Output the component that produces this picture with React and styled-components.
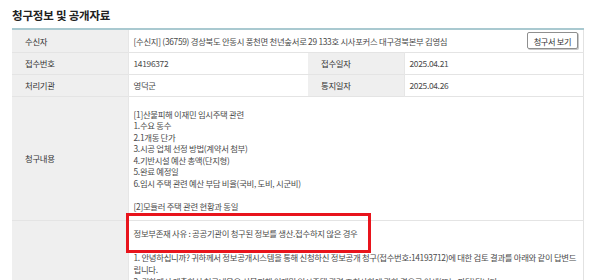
import React from 'react';
import styled, { createGlobalStyle } from 'styled-components';

const GlobalStyle = createGlobalStyle`
  html, body {
    margin: 0;
    padding: 0;
    background: #fff;
    overflow: hidden;
  }
  body {
    font-family: "Noto Sans CJK KR", "Noto Sans", sans-serif;
    color: #333;
  }
`;

const requestLines = [
  '[1]산불피해 이재민 임시주택 관련',
  '1.수요 동수',
  '2.1개동 단가',
  '3.시공 업체 선정 방법(계약서 첨부)',
  '4.기반시설 예산 총액(단지형)',
  '5.완료 예정일',
  '6.임시 주택 관련 예산 부담 비율(국비, 도비, 시군비)',
  '',
  '[2]모듈러 주택 관련 현황과 동일',
];

const answerLines = [
  '정보부존재 사유 : 공공기관이 청구된 정보를 생산.접수하지 않은 경우',
  '',
  '1. 안녕하십니까? 귀하께서 정보공개시스템을 통해 신청하신 정보공개 청구(접수번호:14193712)에 대한 검토 결과를 아래와 같이 답변드',
  '립니다.',
  '2. 귀하께서 제출하신 청구내용은 산불피해 이재민 임시주택 관련 조치사항에 관한 경우로 이세(또는 판단)됩니다.',
];

const App = () => {
  return (
    <>
      <GlobalStyle />
      <Page>
        <Title>청구정보 및 공개자료</Title>
        <Wrapper>
          <Table>
            <colgroup>
              <col style={{ width: 116 }} />
              <col style={{ width: 180 }} />
              <col style={{ width: 96 }} />
              <col />
            </colgroup>
            <tbody>
              <Row $h={23}>
                <Th>수신자</Th>
                <Td colSpan={3}>
                  <Inline>
                    <span>[수신지] (36759) 경상북도 안동시 풍천면 천년숲서로 29 133호 시사포커스 대구경북본부 김영심</span>
                    <ViewButton type="button">청구서 보기</ViewButton>
                  </Inline>
                </Td>
              </Row>
              <Row $h={22}>
                <Th>접수번호</Th>
                <Td>14196372</Td>
                <Th>접수일자</Th>
                <Td>2025.04.21</Td>
              </Row>
              <Row $h={22}>
                <Th>처리기관</Th>
                <Td>영덕군</Td>
                <Th>통지일자</Th>
                <Td>2025.04.26</Td>
              </Row>
              <Row>
                <Th>청구내용</Th>
                <Td colSpan={3} $pad="12px 5px 8px">
                  {requestLines.map((line, i) => (
                    <Line key={i}>{line || '\u00a0'}</Line>
                  ))}
                </Td>
              </Row>
              <Row>
                <Th></Th>
                <Td colSpan={3} $pad="6px 5px 10px">
                  {answerLines.map((line, i) => (
                    <Line key={i} $lh={12}>{line || '\u00a0'}</Line>
                  ))}
                </Td>
              </Row>
            </tbody>
          </Table>
          <Highlight />
        </Wrapper>
      </Page>
    </>
  );
};

const Page = styled.div`
  padding: 7px 16px 0 12px;
`;

const Title = styled.h3`
  margin: 0 0 5px;
  font-size: 11.5px;
  line-height: 16px;
  font-weight: 700;
  color: #222;
  letter-spacing: -0.2px;
`;

const Wrapper = styled.div`
  position: relative;
`;

const Table = styled.table`
  width: 572px;
  border-collapse: collapse;
  table-layout: fixed;
  border-top: 2px solid #a9c9d0;
  border-right: 1px solid #e2e2e2;
  font-size: 8.4px;
  letter-spacing: -0.3px;
`;

const Row = styled.tr`
  height: ${({ $h }) => ($h ? `${$h}px` : 'auto')};
  border-bottom: 1px solid #e4e4e4;
`;

const Th = styled.th`
  background: #efefef;
  color: #333;
  font-weight: 400;
  text-align: left;
  padding: 0 0 0 13px;
  border-right: 1px solid #e6e6e6;
`;

const Td = styled.td`
  background: #fff;
  color: #4a4a4a;
  padding: ${({ $pad }) => $pad || '0 5px'};
  overflow: hidden;
  vertical-align: middle;
`;

const Inline = styled.div`
  display: flex;
  align-items: center;
  justify-content: space-between;
`;

const ViewButton = styled.button`
  width: 51px;
  height: 17px;
  padding: 0;
  background: #fff;
  border: 1px solid #8f8f8f;
  border-radius: 2px;
  box-shadow: 1px 1px 0 #c8c8c8;
  font-family: inherit;
  font-size: 8.2px;
  letter-spacing: -0.3px;
  color: #333;
`;

const Line = styled.div`
  line-height: ${({ $lh }) => $lh || 11.5}px;
  white-space: nowrap;
`;

const Highlight = styled.div`
  position: absolute;
  left: 114px;
  top: 185px;
  width: 245px;
  height: 40px;
  box-sizing: border-box;
  border: 3px solid #e8141c;
  pointer-events: none;
`;

export default App;
